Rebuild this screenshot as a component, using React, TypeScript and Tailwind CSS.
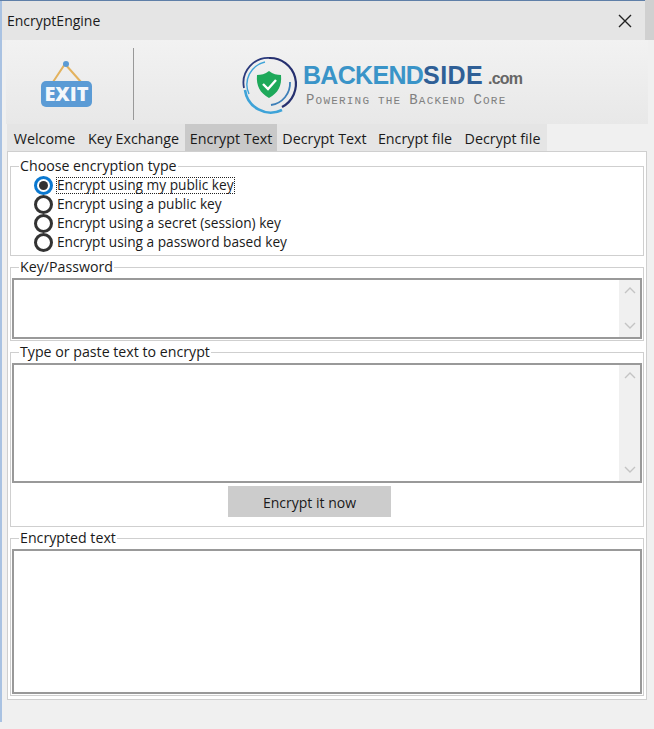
const font = { fontFamily: '"Open Sans", sans-serif' };

function ExitSign() {
  return (
    <svg width="52" height="52" viewBox="0 0 52 52" className="block">
      <path d="M13 22 L25 4 L41 22" fill="none" stroke="#e3b25e" strokeWidth="2" />
      <circle cx="26" cy="4" r="3" fill="#5b9bd5" />
      <rect x="1" y="21" width="51" height="26" rx="5" fill="#5b9bd5" />
      <text x="26.5" y="41" textAnchor="middle" fill="#f4f7fb" fontSize="20" fontWeight="800" fontFamily="'Open Sans', sans-serif">EXIT</text>
    </svg>
  );
}

function Logo() {
  return (
    <div className="flex items-start">
      <svg width="64" height="64" viewBox="0 0 64 64" className="block">
        <path d="M33 6 A25 25 0 0 0 6 36" fill="none" stroke="#2b3a7c" strokeWidth="1.8" />
        <path d="M11 42 A23 23 0 0 1 27 10" fill="none" stroke="#3ea3d8" strokeWidth="1.4" />
        <path d="M31 6 A26 26 0 0 1 44 55" fill="none" stroke="#26306f" strokeWidth="2.2" />
        <path d="M7 38 A26 26 0 0 0 44 58" fill="none" stroke="#3ea3d8" strokeWidth="2.6" />
        <path d="M52 30 A22 22 0 0 1 33 53" fill="none" stroke="#3d7fb8" strokeWidth="1.8" />
        <path d="M31 19 C35 22 39 23 43 23 C44 34 40 41 31 46 C22 41 18 34 19 23 C23 23 27 22 31 19 Z" fill="#1ea95a" />
        <path d="M25 32 L30 37 L38 28" fill="none" stroke="#ffffff" strokeWidth="2.4" />
      </svg>
      <div className="ml-[1px] mt-[8px] flex flex-col">
        <div className="flex items-baseline h-[31px] leading-[31px] whitespace-nowrap" style={{ fontFamily: '"Liberation Sans", sans-serif' }}>
          <span className="text-[25px] font-bold text-[#3a94c8] tracking-[-0.7px]">BACKEND</span>
          <span className="text-[25px] font-bold text-[#2f5f96] tracking-[0.4px]">SIDE</span>
          <span className="ml-[5px] text-[16px] font-bold text-[#666666] tracking-[-0.8px]">.com</span>
        </div>
        <div className="h-[17px] mt-[1px] pl-[3px] leading-[17px] text-[#808080] text-[14px] tracking-[1.2px] whitespace-nowrap" style={{ fontFamily: '"Liberation Mono", monospace' }}>
          <span>P</span><span className="text-[11px]">OWERING THE </span><span>B</span><span className="text-[11px]">ACKEND </span><span>C</span><span className="text-[11px]">ORE</span>
        </div>
      </div>
    </div>
  );
}

const tabs = [
  { label: 'Welcome', cls: 'w-[75px]' },
  { label: 'Key Exchange', cls: 'w-[103px]' },
  { label: 'Encrypt Text', cls: 'w-[92px] bg-[#c9c9c9]' },
  { label: 'Decrypt Text', cls: 'w-[95px]' },
  { label: 'Encrypt file', cls: 'w-[86px]' },
  { label: 'Decrypt file', cls: 'w-[89px]' },
];

function Radio({ label, checked, tall }: { label: string; checked?: boolean; tall?: boolean }) {
  return (
    <div className={`flex items-center pl-[23px] ${tall ? 'h-[20px]' : 'h-[19px]'}`}>
      <span className={`flex items-center justify-center w-[19px] h-[19px] rounded-full border-[3px] bg-white shrink-0 ${checked ? 'border-[#0a78d0]' : 'border-[#333333]'}`}>
        {checked && <span className="w-[9px] h-[9px] rounded-full bg-[#333333]" />}
      </span>
      <span className={`ml-[3px] h-[17px] leading-[16px] text-[13.7px] whitespace-nowrap px-[1px] ${checked ? 'outline-1 outline-dotted outline-[#222222] -outline-offset-1' : ''}`}>{label}</span>
    </div>
  );
}

function Scrollbar() {
  return (
    <div className="absolute right-0 top-0 bottom-0 w-[21px] bg-[#f0f0f0] flex flex-col justify-between items-center pt-[7px] pb-[8px] text-[#c4c4c4]">
      <svg width="12" height="7" viewBox="0 0 12 7"><path d="M1 6 L6 1 L11 6" fill="none" stroke="currentColor" strokeWidth="1.4" /></svg>
      <svg width="12" height="7" viewBox="0 0 12 7"><path d="M1 1 L6 6 L11 1" fill="none" stroke="currentColor" strokeWidth="1.4" /></svg>
    </div>
  );
}

function Group({ title, className, children }: { title: string; className: string; children: React.ReactNode }) {
  return (
    <fieldset className={`border border-[#cfcfcf] min-w-0 shrink-0 ${className}`}>
      <legend className="ml-[8px] px-[1px] text-[14.2px] leading-[14px] text-[#1a1a1a]">{title}</legend>
      {children}
    </fieldset>
  );
}

function Box({ className, scroll }: { className: string; scroll?: boolean }) {
  return (
    <div className={`relative mx-[1px] border-2 border-[#999999] bg-white ${className}`}>
      {scroll && <Scrollbar />}
    </div>
  );
}

export default function App() {
  return (
    <div className="relative w-[654px] h-[729px] bg-[#f0f0f0] overflow-hidden text-[14px] text-[#1a1a1a]" style={font}>
      <div className="absolute left-0 top-0 bottom-[7px] w-[2px] bg-[#a9c2e2]" />
      <div className="absolute left-0 right-[9px] top-0 h-[1px] bg-[#5f7fa8]" />
      <div className="absolute right-0 top-0 w-[9px] h-[40px] bg-[#d0d0d0]" />

      <div className="flex items-center justify-between h-[40px] mr-[9px] pl-[7px] pr-[13px] pt-[1px] bg-[#e5e5e5]">
        <span>EncryptEngine</span>
        <svg width="14" height="14" viewBox="0 0 14 14"><path d="M1 1 L13 13 M13 1 L1 13" stroke="#222222" strokeWidth="1.4" fill="none" /></svg>
      </div>

      <div className="flex h-[84px] mx-[6px] bg-gradient-to-b from-[#f2f2f2] to-[#e8e8e8]">
        <div className="w-[127px] flex justify-center pt-[20px] pr-[8px] shrink-0">
          <ExitSign />
        </div>
        <div className="w-[1px] h-[72px] mt-[8px] bg-[#999999] shrink-0" />
        <div className="flex-1 pl-[104px] pt-[12px]">
          <Logo />
        </div>
      </div>

      <div className="flex h-[27px] ml-[7px] w-[540px] bg-[#e5e5e5]">
        {tabs.map((t) => (
          <div key={t.label} className={`flex items-center justify-center pt-[2px] text-[14.3px] whitespace-nowrap ${t.cls}`}>{t.label}</div>
        ))}
      </div>

      <div className="ml-[7px] mr-[7px] h-[549px] border border-[#cfcfcf] bg-white px-[2px] pt-[7px] flex flex-col">
        <Group title="Choose encryption type" className="h-[97px] pt-[2px]">
          <Radio label="Encrypt using my public key" checked tall />
          <Radio label="Encrypt using a public key" />
          <Radio label="Encrypt using a secret (session) key" />
          <Radio label="Encrypt using a password based key" />
        </Group>
        <Group title="Key/Password" className="h-[81px] mt-[4px]">
          <Box className="h-[61px] mt-[4px]" scroll />
        </Group>
        <Group title="Type or paste text to encrypt" className="h-[182px] mt-[4px]">
          <Box className="h-[120px] mt-[4px]" scroll />
          <div className="flex mt-[3px] pl-[217px]">
            <button className="w-[163px] h-[31px] pt-[1px] bg-[#cccccc] text-center">Encrypt it now</button>
          </div>
        </Group>
        <Group title="Encrypted text" className="h-[165px] mt-[4px]">
          <Box className="h-[145px] mt-[4px]" />
        </Group>
      </div>
    </div>
  );
}
